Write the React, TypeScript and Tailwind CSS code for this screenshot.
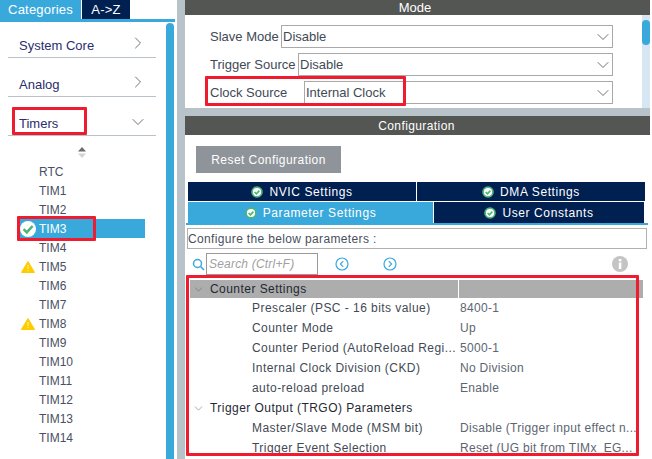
import { FunctionComponent } from 'react'
import { ChevronDown, ChevronRight } from 'lucide-react'

const timers = ['RTC', 'TIM1', 'TIM2', 'TIM3', 'TIM4', 'TIM5', 'TIM6', 'TIM7', 'TIM8', 'TIM9', 'TIM10', 'TIM11', 'TIM12', 'TIM13', 'TIM14']

const warnings = ['TIM5', 'TIM8']

const params = [
  { label: 'Prescaler (PSC - 16 bits value)', value: '8400-1' },
  { label: 'Counter Mode', value: 'Up' },
  { label: 'Counter Period (AutoReload Regi...', value: '5000-1' },
  { label: 'Internal Clock Division (CKD)', value: 'No Division' },
  { label: 'auto-reload preload', value: 'Enable' },
]

const CheckBadge: FunctionComponent<{ size: number; color: string }> = ({ size, color }) => (
  <svg width={size} height={size} viewBox="0 0 16 16" className="shrink-0">
    <circle cx="8" cy="8" r="8" fill="#ffffff" />
    <path d="M3.6 8.2 L6.8 11.4 L12.6 5" fill="none" stroke={color} strokeWidth="2.6" />
  </svg>
)

const SmallCheck = () => (
  <svg width="12" height="12" viewBox="0 0 12 12" className="shrink-0">
    <circle cx="6" cy="6" r="5.8" fill="#4cb578" />
    <circle cx="6" cy="6" r="4.1" fill="#ffffff" />
    <path d="M3.6 6 L5.4 7.8 L8.4 4.6" fill="none" stroke="#4cb578" strokeWidth="1.6" />
  </svg>
)

const Warning = () => (
  <svg width="14" height="12" viewBox="0 0 14 12" className="ml-px shrink-0">
    <path d="M7 0.5 L13.6 11.5 L0.4 11.5 Z" fill="#ffcc00" stroke="#ffcc00" strokeLinejoin="round" />
    <rect x="6.5" y="4" width="1" height="4" fill="#fff3b0" />
    <rect x="6.5" y="9" width="1" height="1" fill="#fff3b0" />
  </svg>
)

const Category: FunctionComponent<{ name: string; open?: boolean }> = ({ name, open }) => (
  <div className="flex h-[39px] items-end justify-between border-b border-[#b9c2c8] pb-[2px] pl-[11px] pr-[10px]">
    <span className="text-[13px] leading-[18px] text-[#2b2d6e]">{name}</span>
    {open ? (
      <ChevronDown size={20} strokeWidth={1} className="mb-[1px] -mr-[2px] text-[#555555]" />
    ) : (
      <ChevronRight size={20} strokeWidth={1} className="mb-[2px] -mr-[2px] text-[#555555]" />
    )}
  </div>
)

const SelectRow: FunctionComponent<{ label: string; value: string; labelWidth: string }> = ({ label, value, labelWidth }) => (
  <div className="flex h-[23px] items-center text-[13px] text-[#3f4a55]">
    <span className={`${labelWidth} shrink-0 whitespace-nowrap`}>{label}</span>
    <div className="flex h-[23px] flex-1 items-center justify-between border border-[#a9a9a9] pl-[1px]">
      <span>{value}</span>
      <ChevronDown size={20} strokeWidth={1} className="-mr-px text-[#555555]" />
    </div>
  </div>
)

const SettingsTab: FunctionComponent<{ label: string; width: string; active?: boolean; height?: string }> = ({ label, width, active, height }) => (
  <div className={`flex ${width} ${height ?? 'h-[20px]'} items-center justify-center gap-[6px] text-[12px] tracking-[0.6px] text-white ${active ? 'bg-[#39a9dc]' : 'bg-[#002052]'}`}>
    <SmallCheck />
    <span>{label}</span>
  </div>
)

const ParamRow: FunctionComponent<{ label: string; value: string }> = ({ label, value }) => (
  <div className="flex h-[20px] items-center text-[12px] tracking-[0.45px] text-[#3f4a55]">
    <span className="w-[270px] shrink-0 overflow-hidden pl-[62px] whitespace-nowrap">{label}</span>
    <span className="whitespace-nowrap tracking-[0.3px] text-[#5c6670]">{value}</span>
  </div>
)

const GroupRow: FunctionComponent<{ label: string; shaded?: boolean }> = ({ label, shaded }) => (
  <div className={`flex items-center text-[12px] tracking-[0.45px] text-[#1f2933] ${shaded ? 'h-[18px] bg-[#adadad]' : 'h-[20px]'}`}>
    <div className={`flex h-full w-[269px] items-center gap-[5px] pl-[2px] whitespace-nowrap ${shaded ? 'border-r border-white' : ''}`}>
      <ChevronDown size={13} strokeWidth={1} className="shrink-0 text-[#666666]" />
      <span>{label}</span>
    </div>
  </div>
)

const Highlight: FunctionComponent<{ className: string }> = ({ className }) => (
  <div className={`absolute rounded-[1px] border-[3px] border-[#ee1c2e] ${className}`} />
)

export default function App() {
  return (
    <div className="relative flex h-[459px] w-[652px] overflow-hidden bg-[#b8c2c9] font-['Liberation_Sans',Arial,sans-serif]">
      <aside className="flex h-full w-[177px] shrink-0 flex-col bg-white">
        <div className="flex h-[19px] shrink-0 bg-white text-[13px] tracking-[0.2px] text-white">
          <div className="flex w-[81px] items-center justify-center bg-[#39a9dc]">Categories</div>
          <div className="ml-px flex w-[48px] items-center justify-center bg-[#002052]">A-&gt;Z</div>
        </div>
        <div className="h-[3px] w-[175px] shrink-0 bg-[#39a9dc]" />
        <div className="flex min-h-0 flex-1">
          <div className="w-[166px] pl-[8px]">
            <div className="-mt-[3px] w-[148px]">
              <Category name="System Core" />
              <Category name="Analog" />
              <Category name="Timers" open />
            </div>
            <div className="flex h-[26px] w-[148px] items-center justify-center pl-0 pr-[1px] pt-[7px]">
              <svg width="8" height="11" viewBox="0 0 8 11">
                <path d="M4 0 L8 4.5 L0 4.5 Z" fill="#6b6b6b" />
                <path d="M4 11 L8 6.5 L0 6.5 Z" fill="#d4d4d4" />
              </svg>
            </div>
            <ul className="-ml-[8px] w-[145px]">
              {timers.map((name) => {
                const selected = name === 'TIM3'
                return (
                  <li
                    key={name}
                    className={`ml-[19px] flex h-[19px] items-center text-[12px] ${selected ? 'bg-[#39a9dc] text-white' : 'text-[#4a4f63]'}`}
                  >
                    <span className="flex w-[20px] shrink-0 items-center justify-start pl-[1px]">
                      {selected && <CheckBadge size={16} color="#4cb578" />}
                      {warnings.includes(name) && <Warning />}
                    </span>
                    <span>{name}</span>
                  </li>
                )
              })}
            </ul>
          </div>
          <div className="mt-[1px] h-full w-[8px] rounded-t-[4px] bg-[#39a9dc]" />
        </div>
      </aside>

      <main className="ml-[8px] flex h-full w-[465px] shrink-0 flex-col">
        <div className="flex h-[15px] shrink-0 items-center justify-center bg-[#545654] pr-[5px] text-[13px] text-white">Mode</div>
        <div className="flex h-[93px] shrink-0 bg-white">
          <div className="flex w-[428px] flex-col gap-[5px] pl-[25px] pt-[10px]">
            <SelectRow label="Slave Mode" value="Disable" labelWidth="w-[71px]" />
            <SelectRow label="Trigger Source" value="Disable" labelWidth="w-[88px]" />
            <SelectRow label="Clock Source" value="Internal Clock" labelWidth="w-[94px]" />
          </div>
          <div className="ml-[29px] h-full w-[8px] bg-[#d6e6f2]">
            <div className="mt-[5px] h-[25px] w-[8px] rounded-[4px] bg-[#39a9dc]" />
          </div>
        </div>
        <div className="h-[8px] shrink-0" />
        <div className="flex h-[19px] shrink-0 items-center justify-center bg-[#545654] pr-[2px] text-[12px] tracking-[0.4px] text-white">Configuration</div>
        <div className="min-h-0 flex-1 bg-white pl-[3px] pr-[2px]">
          <button className="ml-[8px] mt-[11px] block h-[27px] w-[145px] bg-[#8e9499] text-[12px] tracking-[0.45px] text-white">Reset Configuration</button>
          <div className="mt-[9px] flex gap-px">
            <SettingsTab label="NVIC Settings" width="w-[228px]" height="h-[19px]" />
            <SettingsTab label="DMA Settings" width="w-[228px]" height="h-[19px]" />
          </div>
          <div className="mt-px flex gap-px">
            <SettingsTab label="Parameter Settings" width="w-[245px]" height="h-[21px]" active />
            <SettingsTab label="User Constants" width="w-[210px]" height="h-[21px]" />
          </div>
          <div className="-ml-[2px] h-[2px] w-[462px] bg-[#39a9dc]" />
          <div className="-ml-px mt-[3px] flex h-[21px] w-[460px] items-center border border-[#b0b0b0] text-[12px] tracking-[0.35px] text-[#4a4f5c]">Configure the below parameters :</div>
          <div className="mt-[4px] flex h-[22px] items-center">
            <svg width="13" height="13" viewBox="0 0 13 13" className="ml-[4px] shrink-0">
              <circle cx="5.5" cy="5.5" r="4" fill="none" stroke="#39a9dc" strokeWidth="1.5" />
              <path d="M8.5 8.5 L12 12" stroke="#39a9dc" strokeWidth="1.6" />
            </svg>
            <div className="ml-[1px] flex h-[22px] w-[112px] items-center border border-[#9a9a9a] pl-[2px] text-[12px] italic tracking-[0.2px] text-[#a0a0a0]">Search (Ctrl+F)</div>
            <svg width="14" height="14" viewBox="0 0 14 14" className="ml-[17px] shrink-0">
              <circle cx="7" cy="7" r="6" fill="none" stroke="#39a9dc" strokeWidth="1.2" />
              <path d="M8.2 4.2 L5.4 7 L8.2 9.8" fill="none" stroke="#39a9dc" strokeWidth="1.2" />
            </svg>
            <svg width="14" height="14" viewBox="0 0 14 14" className="ml-[34px] shrink-0">
              <circle cx="7" cy="7" r="6" fill="none" stroke="#39a9dc" strokeWidth="1.2" />
              <path d="M5.8 4.2 L8.6 7 L5.8 9.8" fill="none" stroke="#39a9dc" strokeWidth="1.2" />
            </svg>
            <svg width="16" height="16" viewBox="0 0 16 16" className="ml-[215px] shrink-0">
              <circle cx="8" cy="8" r="8" fill="#c4c4c4" />
              <rect x="6.8" y="6.6" width="2.6" height="6.4" fill="#ffffff" />
              <rect x="6.8" y="3" width="2.6" height="2.4" fill="#ffffff" />
            </svg>
          </div>
          <div className="ml-[2px] mt-[5px] w-[453px]">
            <GroupRow label="Counter Settings" shaded />
            {params.map((p) => (
              <ParamRow key={p.label} label={p.label} value={p.value} />
            ))}
            <GroupRow label="Trigger Output (TRGO) Parameters" />
            <ParamRow label="Master/Slave Mode (MSM bit)" value="Disable (Trigger input effect n..." />
            <ParamRow label="Trigger Event Selection" value="Reset (UG bit from TIMx_EG..." />
          </div>
        </div>
      </main>
      <div className="flex-1 bg-white" />

      <Highlight className="left-[12px] top-[107px] h-[28px] w-[75px]" />
      <Highlight className="left-[17px] top-[216px] h-[25px] w-[79px]" />
      <Highlight className="left-[205px] top-[76px] h-[30px] w-[201px]" />
      <Highlight className="left-[186px] top-[275px] h-[181px] w-[453px]" />
    </div>
  )
}
